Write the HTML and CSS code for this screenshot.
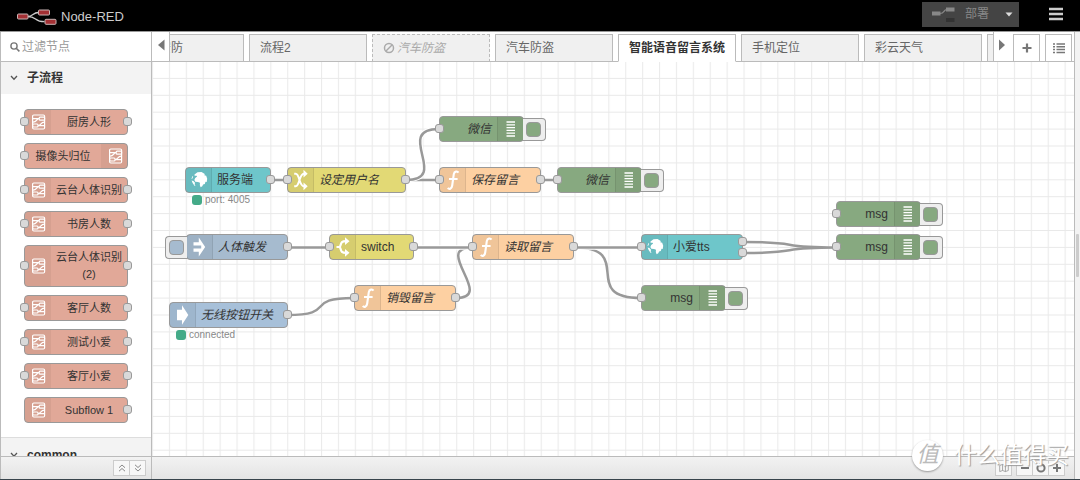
FILE: index.html
```html
<!DOCTYPE html>
<html lang="zh-CN">
<head>
<meta charset="utf-8">
<meta name="viewport" content="width=device-width, initial-scale=1">
<title>Node-RED</title>
<link rel="stylesheet" href="styles.css">
</head>
<body>
<svg class="sprite" aria-hidden="true">
  <symbol id="i-subflow" viewBox="0 1 25 24">
    <g fill="none" stroke="#fff" stroke-width="1.200">
      <rect x="7.600" y="6" width="12" height="14" rx="1.200"/>
      <path d="M8 9.700h6M8 13.200c4 0 3.400-3.500 6-3.500M13 16.600c3 0 2.400-3.400 6.400-3.400M13 16.600h6.400"/>
      <rect x="14.200" y="8.200" width="5.400" height="3" rx=".9"/>
      <rect x="7.600" y="15" width="5.400" height="3" rx=".9"/>
    </g>
  </symbol>
  <symbol id="i-globe" viewBox="0 1 25 24">
    <path fill="#fff" d="M8.500 7.500l3-2.200 4-.2 3.300 2-.4 1.200 1.800.4 1 3.100-.5 3.300-1.200-.3-.7 2.100-1.700.6-.8 1.800-1.700.9-.8-2.300.2-2.100-2-.9-2.700-.2-.9-1.700.8-2 1.900-1.400-.5-.9-2 .1zM6.300 9.300l.9.300-1.100 2.400-.6-.2zM5.600 13.600l1.800.5 1.600 1.700-.3 1.700.8 1.600-1-.4-1.900-2.600z"/>
  </symbol>
  <symbol id="i-change" viewBox="0 1 25 24">
    <path fill="none" stroke="#fff" stroke-width="2" d="M6.200 6.700h1.600c3.700 0 3.400 12.600 8 12.600h1M6.200 19.300h1.600c3.700 0 3.400-12.600 8-12.600h1"/>
    <path fill="#fff" d="M15.500 2.800l4.200 3.900-4.200 3.900zM15.500 15.400l4.200 3.900-4.200 3.900z"/>
  </symbol>
  <symbol id="i-switch" viewBox="0 1 25 24">
    <path fill="none" stroke="#fff" stroke-width="2.200" d="M6.500 13h4.200M16 7.200c-6 0-4.400 2.800-6.200 5.800 1.800 3 .2 5.800 6.200 5.800"/>
    <path fill="#fff" d="M15 3.300l4.500 3.900-4.500 3.900zM15 14.900l4.500 3.900-4.500 3.900z"/>
  </symbol>
  <symbol id="i-function" viewBox="0 1 25 24">
    <path fill="none" stroke="#fff" stroke-width="2.100" d="M18.500 5.600c-1-1.500-4.200-1.700-4.700 1.600l-1.600 11.300c-.5 3.700-3 4-4.500 2.600M9 12h8.600"/>
  </symbol>
  <symbol id="i-inject" viewBox="0 1 25 24">
    <path fill="#fff" d="M6.500 8.300h5.300V3.500l6.400 9.500-6.400 9.500v-4.800H6.500v-3.200h7.700v-3H6.500z"/>
  </symbol>
  <symbol id="i-arrow" viewBox="0 1 25 24">
    <path fill="#fff" d="M7 7.700h5V3.300L18.300 13 12 22.700v-4.400H7z"/>
  </symbol>
  <symbol id="i-debug" viewBox="0 1 25 24">
    <path stroke="#fff" stroke-width="1.300" d="M8.500 6h8.500M8.500 8.800h8.500M8.500 11.600h8.500M8.500 14.400h8.500M8.500 17.200h8.500M8.500 20h8.500"/>
  </symbol>
</svg>

<header class="header">
  <a class="brand" href="#">
    <svg class="brand-logo" viewBox="0 0 40 18" aria-hidden="true">
      <path fill="none" stroke="#ccc" stroke-width="1.300" d="M11 8.500c6 0 5-4 11-4M11 8.500c10 0 6 5.200 17 5.200"/>
      <g fill="#a33034" stroke="#c9b5b5"><rect x="1" y="6" width="10.500" height="5" rx="1"/><rect x="22" y="2" width="11" height="5" rx="1"/><rect x="28.500" y="11.300" width="11" height="5" rx="1"/></g>
    </svg>
    <span>Node-RED</span>
  </a>
  <div class="header-tools">
    <button class="deploy" type="button">
      <svg class="deploy-icon" viewBox="0 0 24 16" aria-hidden="true">
        <path fill="none" stroke="#888" stroke-width="1.200" d="M9 7.500c5 0 3-4 7-4"/>
        <path fill="#888" d="M1 5.500h8.500v4H1zM15 1.500h8.500v4H15z"/><path fill="#333" d="M15 12h8.500v4H15z"/>
      </svg>
      <span>部署</span>
      <svg class="deploy-caret" viewBox="0 0 8 5" aria-hidden="true"><path fill="#ddd" d="M.5.500h7L4 4.500z"/></svg>
    </button>
    <button class="menu" type="button" aria-label="菜单">
      <svg viewBox="0 0 16 14" aria-hidden="true"><path stroke="#ccc" stroke-width="2.400" d="M1 2h14M1 7h14M1 12h14"/></svg>
    </button>
  </div>
</header>

<main class="editor">
  <aside class="palette">
    <label class="search">
      <svg class="search-icon" viewBox="0 0 10 10" aria-hidden="true"><circle cx="4" cy="4" r="3.100" fill="none" stroke="#777" stroke-width="1.400"/><path stroke="#777" stroke-width="1.600" d="M6.200 6.200l3.200 3.200"/></svg>
      <input type="search" placeholder="过滤节点" aria-label="过滤节点">
    </label>
    <div class="palette-scroll">
      <button class="category" type="button"><svg viewBox="0 0 8 6" aria-hidden="true"><path d="M1 1l3 3.200L7 1"/></svg>子流程</button>
      <ul class="palette-list">
        <li class="pnode in out"><svg class="icon"><use href="#i-subflow"/></svg><span>厨房人形</span></li>
        <li class="pnode in flip"><svg class="icon"><use href="#i-subflow"/></svg><span>摄像头归位</span></li>
        <li class="pnode in out"><svg class="icon"><use href="#i-subflow"/></svg><span>云台人体识别</span></li>
        <li class="pnode in out"><svg class="icon"><use href="#i-subflow"/></svg><span>书房人数</span></li>
        <li class="pnode in out"><svg class="icon"><use href="#i-subflow"/></svg><span>云台人体识别<br>(2)</span></li>
        <li class="pnode in out"><svg class="icon"><use href="#i-subflow"/></svg><span>客厅人数</span></li>
        <li class="pnode in out"><svg class="icon"><use href="#i-subflow"/></svg><span>测试小爱</span></li>
        <li class="pnode in out"><svg class="icon"><use href="#i-subflow"/></svg><span>客厅小爱</span></li>
        <li class="pnode out"><svg class="icon"><use href="#i-subflow"/></svg><span>Subflow 1</span></li>
      </ul>
      <button class="category category-next" type="button"><svg viewBox="0 0 8 6" aria-hidden="true"><path d="M1 1l3 3.200L7 1"/></svg>common</button>
    </div>
    <div class="footer palette-footer">
      <div class="group">
        <button class="tool" type="button" aria-label="全部折叠"><svg viewBox="0 0 10 10"><path d="M2 4.700l3-2.700 3 2.700M2 8.200l3-2.700 3 2.700"/></svg></button>
        <button class="tool" type="button" aria-label="全部展开"><svg viewBox="0 0 10 10"><path d="M2 1.800l3 2.700 3-2.700M2 5.300l3 2.700 3-2.700"/></svg></button>
      </div>
    </div>
  </aside>

  <section class="workspace">
    <nav class="tabbar">
      <button class="scroll scroll-left" type="button" aria-label="向左"><svg viewBox="0 0 8 12"><path fill="#777" d="M7.500.500v11L1 6z"/></svg></button>
      <div class="tabs">
        <button class="tab tab-first" type="button">安防</button>
        <button class="tab" type="button">流程2</button>
        <button class="tab disabled" type="button"><svg viewBox="0 0 12 12" aria-hidden="true"><g fill="none" stroke="#aaa" stroke-width="1.500"><circle cx="6" cy="6" r="4.500"/><path d="M3 9l6-6"/></g></svg>汽车防盗</button>
        <button class="tab" type="button">汽车防盗</button>
        <button class="tab active" type="button">智能语音留言系统</button>
        <button class="tab" type="button">手机定位</button>
        <button class="tab" type="button">彩云天气</button>
        <button class="tab" type="button" aria-label="更多流程"></button>
      </div>
      <button class="scroll scroll-right" type="button" aria-label="向右"><svg viewBox="0 0 8 12"><path fill="#777" d="M1 .500v11L7 6z"/></svg></button>
      <div class="tab-tools">
        <button class="tab-tool" type="button" aria-label="添加流程"><svg viewBox="0 0 12 12"><path stroke="#777" stroke-width="2.200" d="M6 1.500v9M1.500 6h9"/></svg></button>
        <button class="tab-tool" type="button" aria-label="流程列表"><svg viewBox="0 0 12 12"><path stroke="#777" stroke-width="1.500" d="M0 2h2M3.500 2H12M0 4.800h2M3.500 4.800H12M0 7.600h2M3.500 7.600H12M0 10.400h2M3.500 10.400H12"/></svg></button>
      </div>
    </nav>

    <div class="canvas">
      <svg class="wires" aria-hidden="true">
        <defs>
          <pattern id="grid" y="-1" width="16.900" height="16.900" patternUnits="userSpaceOnUse"><path fill="none" stroke="#e9e9e9" d="M.6 0v16.900M0 .6h16.900"/></pattern>
        </defs>
        <rect width="100%" height="100%" fill="url(#grid)"/>
        <g class="wire" transform="translate(-152 -62)">
          <path d="M270 180H287M406 180H439M541 180H557M287 247.500H329"/>
          <path class="halo" d="M406 180C451 180 393 129 439 129"/><path d="M406 180C451 180 393 129 439 129"/>
          <path d="M287 315C339 315 302 298 354 298"/>
          <path d="M456 298C496 298 432 247.500 472 247.500"/>
          <path d="M574 247.500C637 247.500 578 298 641 298"/>
          <path class="halo" d="M414 247.500H472M574 247.500H641"/><path d="M414 247.500H472M574 247.500H641"/>
          <path d="M743 242C806 242 773 247.500 836 247.500M743 253C806 253 773 247.500 836 247.500"/>
        </g>
      </svg>

      <div class="node teal out n-server"><svg class="icon"><use href="#i-globe"/></svg><span class="label">服务端</span><span class="status">port: 4005</span></div>
      <div class="node yellow in out named n-user"><svg class="icon"><use href="#i-change"/></svg><span class="label">设定用户名</span></div>
      <div class="node orange in out named n-save"><svg class="icon"><use href="#i-function"/></svg><span class="label">保存留言</span></div>
      <div class="node green in flip named n-wx1"><button class="trigger" type="button" aria-label="微信"></button><svg class="icon"><use href="#i-debug"/></svg><span class="label">微信</span></div>
      <div class="node green in flip named n-wx2"><button class="trigger" type="button" aria-label="微信"></button><svg class="icon"><use href="#i-debug"/></svg><span class="label">微信</span></div>
      <div class="node inject out named n-body"><button class="trigger" type="button" aria-label="人体触发"></button><svg class="icon"><use href="#i-inject"/></svg><span class="label">人体触发</span></div>
      <div class="node yellow in out n-switch"><svg class="icon"><use href="#i-switch"/></svg><span class="label">switch</span></div>
      <div class="node orange in out named n-read"><svg class="icon"><use href="#i-function"/></svg><span class="label">读取留言</span></div>
      <div class="node teal in n-tts"><svg class="icon"><use href="#i-globe"/></svg><span class="label">小爱tts</span><i class="port port-top"></i><i class="port port-bottom"></i></div>
      <div class="node green in flip n-msg1"><button class="trigger" type="button" aria-label="msg"></button><svg class="icon"><use href="#i-debug"/></svg><span class="label">msg</span></div>
      <div class="node green in flip n-msg2"><button class="trigger" type="button" aria-label="msg"></button><svg class="icon"><use href="#i-debug"/></svg><span class="label">msg</span></div>
      <div class="node green in flip n-msg3"><button class="trigger" type="button" aria-label="msg"></button><svg class="icon"><use href="#i-debug"/></svg><span class="label">msg</span></div>
      <div class="node orange in out named n-destroy"><svg class="icon"><use href="#i-function"/></svg><span class="label">销毁留言</span></div>
      <div class="node blue out named n-wireless"><svg class="icon"><use href="#i-arrow"/></svg><span class="label">无线按钮开关</span><span class="status">connected</span></div>
    </div>

    <div class="footer canvas-footer">
      <div class="group"><button class="tool" type="button" aria-label="导航图"><svg viewBox="0 0 14 12"><path d="M1 2.500l4-1.500 4 1.500 4-1.500v8.500l-4 1.500-4-1.500-4 1.500zM5 1v8.500M9 2.500V11"/></svg></button></div>
      <div class="group zoom">
        <button class="tool" type="button" aria-label="缩小"><svg viewBox="0 0 10 10"><path d="M1 5h8"/></svg></button>
        <button class="tool" type="button" aria-label="重置缩放"><svg viewBox="0 0 10 10"><circle cx="5" cy="5" r="3.600"/></svg></button>
        <button class="tool" type="button" aria-label="放大"><svg viewBox="0 0 10 10"><path d="M1 5h8M5 1v8"/></svg></button>
      </div>
    </div>
    <div class="watermark"><span class="watermark-badge">值</span><span>什么值得买</span></div>
  </section>
  <div class="separator"><span class="handle"></span></div>
</main>
</body>
</html>
```

FILE: styles.css
```css
*, *::before, *::after { box-sizing: border-box; }

body {
  margin: 0;
  height: 100vh;
  display: flex;
  flex-direction: column;
  overflow: hidden;
  border-bottom: 1px solid #38444c;
  background: #fff;
  color: #444;
  font: 12px/16px "Liberation Sans", "Noto Sans CJK SC", sans-serif;
}

button, input { font: inherit; color: inherit; padding: 0; margin: 0; border: 0; background: none; }
svg { display: block; flex: none; }
.sprite { position: absolute; width: 0; height: 0; }

/* Header */
.header {
  flex: none;
  display: flex;
  justify-content: space-between;
  align-items: center;
  height: 32px;
  padding: 0 16px;
  background: #000;
  border-bottom: 1px solid #999;
}
.brand { display: flex; align-items: center; gap: 4px; padding-top: 3px; color: #ccc; font-size: 13px; text-decoration: none; }
.brand-logo { width: 41px; height: 18px; }
.header-tools { display: flex; align-items: center; gap: 29px; padding-bottom: 3px; }
.deploy { display: flex; align-items: center; height: 25px; width: 97px; padding: 0 6px 0 9px; background: #444; color: #888; }
.deploy span { margin-left: 10px; }
.deploy-icon { width: 24px; height: 16px; }
.deploy-caret { width: 8px; height: 5px; margin-left: auto; }
.menu svg { width: 16px; height: 14px; }

.editor { flex: 1; display: flex; min-height: 0; }

/* Palette */
.palette { flex: none; width: 152px; display: flex; flex-direction: column; border: solid #bbb; border-width: 0 1px; }
.search { flex: none; display: flex; align-items: center; gap: 2px; height: 30px; padding: 0 9px; border-bottom: 1px solid #bbb; }
.search-icon { width: 10px; height: 10px; }
.search input { flex: 1; min-width: 0; outline: 0; }
.search input::placeholder { color: #999; opacity: 1; }
.palette-scroll { flex: 1; min-height: 0; overflow: hidden; }
.category { display: flex; align-items: center; gap: 9px; width: 100%; height: 32px; padding: 0 9px; background: #f3f3f3; color: #333; font-weight: bold; }
.category svg { width: 8px; height: 6px; fill: none; stroke: #555; stroke-width: 1.300; }
.category-next { height: 34px; border-top: 1px solid #ddd; }
.palette-list { list-style: none; margin: 0; padding: 15px 23px 14px; display: flex; flex-direction: column; gap: 8px; }
.pnode {
  position: relative;
  display: flex;
  align-items: center;
  min-height: 26px;
  border: 1px solid #999;
  border-radius: 4px;
  background: #e1a898 linear-gradient(to right, #d6a090 26px, transparent 26px);
  color: #333;
  font-size: 11px;
  line-height: 17px;
}
.pnode.flip { background-image: linear-gradient(to left, #d6a090 26px, transparent 26px); }
.pnode > span { flex: 1; padding: 3px 0; text-align: center; white-space: nowrap; }
.icon { width: 26px; height: 24px; background: rgba(0, 0, 0, .05); border-right: 1px solid rgba(0, 0, 0, .08); }
.flip { flex-direction: row-reverse; }
.flip .icon { border-right: 0; border-left: 1px solid rgba(0, 0, 0, .08); }
.pnode .icon { background: none; border-color: transparent; }

/* Ports sit over the node's edges */
.in::before, .out::after, .port {
  content: "";
  position: absolute;
  top: calc(50% - 5px);
  width: 9px;
  height: 9px;
  border: 1px solid #999;
  border-radius: 3px;
  background: #d9d9d9;
}
.in::before { left: -5px; }
.out::after { right: -5px; }
.port { right: -5px; }
.port-top { top: 2px; }
.port-bottom { top: 13px; }

/* Footers */
.footer { flex: none; display: flex; align-items: center; justify-content: flex-end; height: 23px; border-top: 1px solid #bbb; background: linear-gradient(#f2f2f2, #e4e4e4); }
.palette-footer { padding-right: 5px; }
.canvas-footer { gap: 4px; padding-right: 9px; }
.group { display: flex; border: 1px solid #ccc; background: #f7f7f7; }
.tool { width: 15px; height: 14px; display: grid; place-items: center; }
.tool + .tool { width: 16px; border-left: 1px solid #ccc; }
.tool svg { width: 10px; height: 10px; fill: none; stroke: #888; stroke-width: 1; }
.zoom svg { stroke: #777; stroke-width: 2; }

/* Workspace */
.workspace { position: relative; flex: 1; min-width: 0; display: flex; flex-direction: column; }
.tabbar { flex: none; display: flex; height: 30px; border-bottom: 1px solid #bbb; }
.scroll { flex: none; display: grid; place-items: center; padding-bottom: 3px; }
.scroll svg { width: 8px; height: 12px; }
.scroll-left { width: 18px; border-right: 1px solid #bbb; }
.scroll-right { width: 20px; padding-right: 4px; border-left: 1px solid #bbb; }
.tabs { flex: 1; min-width: 0; display: flex; gap: 5px; padding-top: 2px; overflow: hidden; height: 30px; }
.tab {
  flex: none;
  display: flex;
  align-items: center;
  gap: 2px;
  width: 118px;
  height: 28px;
  padding: 0 10px;
  border: 1px solid #bbb;
  background: #f0f0f0;
  color: #666;
  white-space: nowrap;
}
.tab svg { width: 12px; height: 12px; }
.tab-first { width: 98px; margin-left: -24px; padding-left: 12px; }
.tab.disabled { border-style: dashed; border-bottom-style: solid; color: #aaa; font-style: italic; }
.tab.active { background: #fff; border-bottom-color: #fff; color: #333; font-weight: bold; }
.tab-tools { flex: none; display: flex; gap: 5px; padding: 2px 2px 0 0; }
.tab-tool { width: 27px; border: 1px solid #bbb; border-bottom: 0; display: grid; place-items: center; }
.tab-tool svg { width: 12px; height: 12px; }

/* Flow canvas */
.canvas { position: relative; flex: 1; min-height: 0; overflow: hidden; }
.wires { width: 100%; height: 100%; }
.wire { fill: none; stroke: #999; stroke-width: 2.500; }
.wire .halo { stroke: #fff; stroke-width: 4.500; }
.node { position: absolute; display: flex; width: 102px; height: 26px; border: 1px solid #999; border-radius: 4px; color: #333; }
.label { flex: 1; align-self: center; padding: 0 5px; white-space: nowrap; }
.flip .label { padding-right: 6px; text-align: right; }
.named .label { font-style: italic; }
.teal { background: #6ec6ca; }
.yellow { background: #e2d975; }
.orange { background: #fdd0a2; }
.green { background: #87a980; }
.inject { background: #a6bbcf; }
.blue { background: #a7c0d9; }

.status { position: absolute; left: 6px; top: 25px; display: flex; align-items: center; gap: 3px; color: #888; font-size: 10px; line-height: 14px; white-space: nowrap; }
.status::before { content: ""; width: 10px; height: 10px; border-radius: 3px; background: #44aa88; }

.trigger { position: absolute; top: 1px; right: -23px; width: 23px; height: 23px; padding: 0 3px; border: 1px solid #999; border-left: 0; border-radius: 0 4px 4px 0; background: #eee; }
.trigger::before { content: ""; display: block; width: 15px; height: 15px; border: 1px solid #999; border-radius: 4px; background: #87a980; }
.inject .trigger { right: auto; left: -22px; width: 22px; border-left: 1px solid #999; border-right: 0; border-radius: 4px 0 0 4px; }
.inject .trigger::before { background: #a6bbcf; }

.n-server { left: 33px; top: 105px; width: 86px; }
.n-user { left: 135px; top: 105px; width: 119px; }
.n-save { left: 287px; top: 105px; }
.n-wx1 { left: 287px; top: 54px; width: 85px; }
.n-wx2 { left: 405px; top: 105px; width: 85px; }
.n-body { left: 34px; top: 172px; }
.n-switch { left: 177px; top: 172px; width: 85px; }
.n-read { left: 320px; top: 172px; }
.n-tts { left: 489px; top: 172px; }
.n-msg1 { left: 684px; top: 139px; width: 85px; }
.n-msg2 { left: 684px; top: 172px; width: 85px; }
.n-msg3 { left: 489px; top: 223px; width: 85px; }
.n-destroy { left: 202px; top: 223px; }
.n-wireless { left: 17px; top: 240px; width: 119px; }

.watermark { position: absolute; right: 5px; bottom: 8px; display: flex; align-items: center; gap: 11px; color: #fff; font-size: 23px; line-height: 32px; text-shadow: 1px 1px 1px #999; pointer-events: none; }
.watermark-badge { width: 31px; height: 31px; border-radius: 50%; background: #fff; box-shadow: 0 1px 2px #999; color: #bbb; font-size: 22px; line-height: 29px; text-align: center; font-style: italic; text-shadow: none; }

.separator { flex: none; width: 6px; display: flex; align-items: center; justify-content: flex-end; border-left: 1px solid #bbb; background: #f3f3f3; }
.handle { width: 3px; height: 43px; margin-right: 1px; background: #ccc; border-radius: 1px; }
```
